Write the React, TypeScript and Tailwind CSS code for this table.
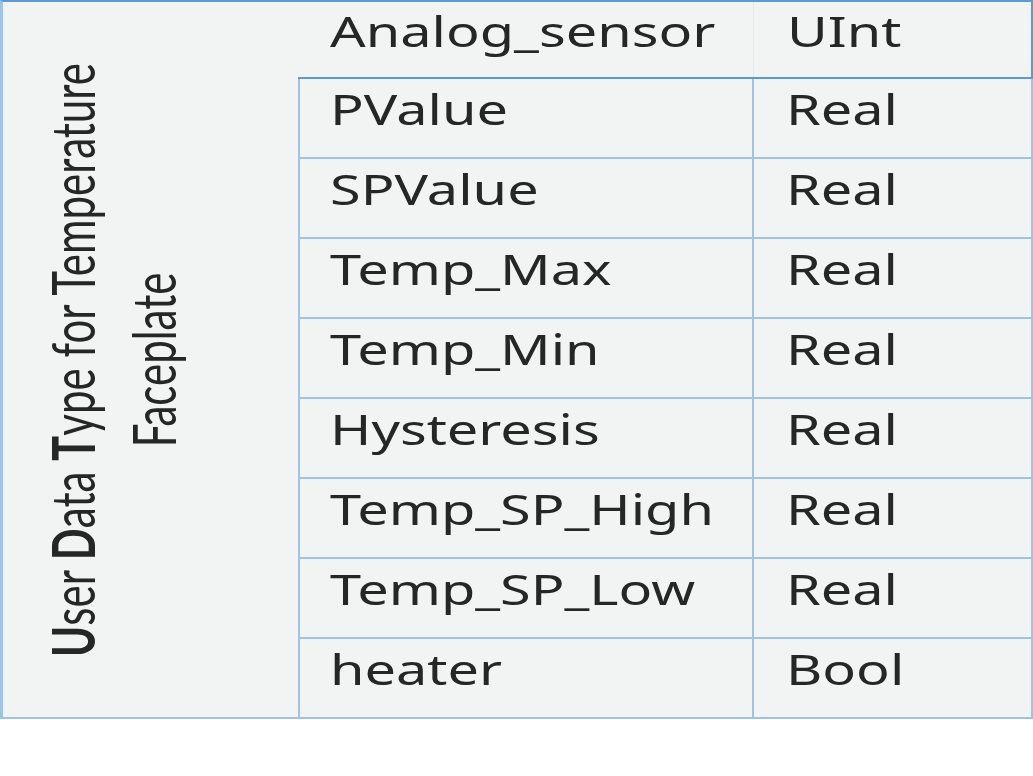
const rows: [string, string][] = [
  ['PValue', 'Real'],
  ['SPValue', 'Real'],
  ['Temp_Max', 'Real'],
  ['Temp_Min', 'Real'],
  ['Hysteresis', 'Real'],
  ['Temp_SP_High', 'Real'],
  ['Temp_SP_Low', 'Real'],
  ['heater', 'Bool'],
];

function CellText({ children }: { children: string }) {
  return (
    <span className="inline-block origin-left scale-x-[1.33] whitespace-nowrap font-['Noto_Sans',sans-serif] text-[42px] leading-[58px] text-[#262626]">
      {children}
    </span>
  );
}

export default function App() {
  return (
    <div className="min-h-[776px] w-[1033px] bg-white">
      <div className="flex w-[1033px] bg-[#f2f3f3]">
        {/* Left: rotated caption */}
        <div className="flex h-[719px] w-[298px] shrink-0 items-center justify-center overflow-hidden border-t-2 border-b-2 border-l-[3px] border-t-[#5b9bd5] border-b-[#9dc3e6] border-l-[#9dc3e6] pr-[74px]">
          <div className="shrink-0 -rotate-90 scale-x-[0.7] whitespace-nowrap text-center font-['Lato',sans-serif] text-[60px] leading-[81px] text-[#262626]">
            <div>
              <b>U</b>ser <b>D</b>ata <b>T</b>ype for Temperature
            </div>
            <div>Faceplate</div>
          </div>
        </div>

        {/* Right: name / type table */}
        <div className="flex flex-1 flex-col">
          <div className="flex h-[79px] border-t-2 border-r-2 border-b-2 border-[#5b9bd5]">
            <div className="w-[456px] border-r border-r-[#e6eaee] pl-[32px]">
              <CellText>Analog_sensor</CellText>
            </div>
            <div className="flex-1 pl-[33px]">
              <CellText>UInt</CellText>
            </div>
          </div>
          {rows.map(([name, type]) => (
            <div
              key={name}
              className="flex h-[80px] border-r-2 border-b-2 border-l-2 border-[#9dc3e6]"
            >
              <div className="w-[454px] border-r-2 border-r-[#9dc3e6] pl-[30px] pt-[1px]">
                <CellText>{name}</CellText>
              </div>
              <div className="flex-1 pl-[32px] pt-[1px]">
                <CellText>{type}</CellText>
              </div>
            </div>
          ))}
        </div>
      </div>
    </div>
  );
}
